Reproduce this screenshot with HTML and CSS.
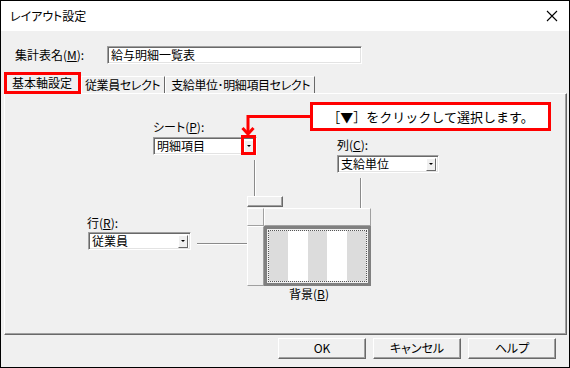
FILE: index.html
```html
<!DOCTYPE html>
<html lang="ja">
<head>
  <meta charset="UTF-8">
  <title>レイアウト設定</title>
  <link rel="stylesheet" href="styles.css">
</head>
<body>
  <div class="window">
    <div class="titlebar">
      <p class="title">レイアウト設定</p>
      <svg class="close" width="12" height="12" viewBox="0 0 12 12">
        <path d="M1 1 L11 11 M11 1 L1 11" stroke="#000" stroke-width="1.1" fill="none"/>
      </svg>
    </div>

    <div class="name-row">
      <label class="name-label">集計表名(<u>M</u>):</label>
      <div class="textbox">給与明細一覧表</div>
    </div>

    <div class="tabs">
      <div class="tab active">基本軸設定</div>
      <div class="tab">従業員セレクト</div>
      <div class="tab">支給単位･明細項目セレクト</div>
    </div>

    <div class="panel">
      <!-- 軸の配置図 -->
      <div class="axis-label sheet-label">シート(<u>P</u>):</div>
      <div class="combo sheet-combo"><span>明細項目</span><i class="drop"></i></div>

      <div class="axis-label col-label">列(<u>C</u>):</div>
      <div class="combo col-combo"><span>支給単位</span><i class="drop"></i></div>

      <div class="axis-label row-label">行(<u>R</u>):</div>
      <div class="combo row-combo"><span>従業員</span><i class="drop"></i></div>

      <div class="vline sheet-line"></div>
      <div class="sheet-tab"></div>
      <div class="vline col-line"></div>
      <div class="hline row-line"></div>

      <div class="preview">
        <div class="head corner"></div>
        <div class="head col-head"></div>
        <div class="head row-head"></div>
        <div class="data">
          <div class="stripes">
            <div class="stripe gray"></div>
            <div class="stripe"></div>
            <div class="stripe gray"></div>
            <div class="stripe"></div>
            <div class="stripe gray"></div>
          </div>
        </div>
      </div>
      <div class="bg-label">背景(<u>B</u>)</div>

      <!-- 注釈 -->
      <div class="mark"></div>
      <svg class="pointer" width="74" height="25" viewBox="0 0 74 25">
        <path d="M74 4.5 H10 V22" stroke="#f00" stroke-width="3" fill="none"/>
        <path d="M4.5 16 L10 22 L15.5 16" stroke="#f00" stroke-width="3" fill="none"/>
      </svg>
      <div class="callout">［▼］をクリックして選択します。</div>
    </div>

    <div class="buttons">
      <div class="btn">OK</div>
      <div class="btn">キャンセル</div>
      <div class="btn">ヘルプ</div>
    </div>
  </div>
</body>
</html>
```

FILE: styles.css
```css
* {
  margin: 0;
  padding: 0;
  box-sizing: border-box;
}
html, body {
  width: 100%;
  height: 100%;
  overflow: hidden;
}
body {
  font-family: "Noto Sans CJK JP", "Noto Sans", sans-serif;
  font-size: 12px;
  color: #000;
  font-feature-settings: "palt";
}
u {
  text-decoration: underline;
  text-underline-offset: 1px;
}
.window {
  width: 570px;
  height: 368px;
  border: 1px solid #000;
  background-color: #f0f0f0;
  display: flex;
  flex-direction: column;
}
.titlebar {
  height: 30px;
  background-color: #fff;
  display: flex;
  align-items: center;
  justify-content: space-between;
  padding: 0 11px 0 9px;
}
.title {
  font-size: 12px;
  line-height: 14px;
}
.name-row {
  display: flex;
  align-items: center;
  margin-top: 15px;
  padding-left: 14px;
  height: 18px;
}
.name-label {
  width: 92px;
  line-height: 14px;
}
.textbox {
  width: 255px;
  height: 18px;
  background-color: #fff;
  border: 1px solid;
  border-color: #a0a0a0 #fff #fff #a0a0a0;
  box-shadow: inset 1px 1px 0 #696969, inset -1px -1px 0 #e3e3e3;
  padding: 0 3px;
  line-height: 16px;
}
.tabs {
  display: flex;
  align-items: flex-end;
  margin-top: 8px;
  padding-left: 3px;
  height: 21px;
  position: relative;
  z-index: 1;
}
.tab {
  height: 17px;
  line-height: 15px;
  padding: 0 4px 0 3px;
  white-space: nowrap;
  letter-spacing: -0.4px;
  border-left: 1px solid #fff;
  border-right: 1px solid #696969;
  border-top: 1px solid #fff;
}
.tab.active {
  height: 22px;
  margin-bottom: -1px;
  width: 77px;
  border: 3px solid #f00;
  background-color: #f0f0f0;
  line-height: 15px;
  padding: 0 0 0 5px;
  letter-spacing: 0;
}
.tab:nth-child(3) {
  padding-left: 5px;
}
.panel {
  position: relative;
  margin-left: 3px;
  width: 563px;
  height: 242px;
  border: 1px solid;
  border-color: #fff #696969 #696969 #fff;
  box-shadow: inset -1px -1px 0 #a0a0a0;
}
.axis-label {
  position: absolute;
  line-height: 14px;
}
.sheet-label { left: 148px; top: 26px; }
.col-label { left: 332px; top: 44px; }
.row-label { left: 82px; top: 122px; }
.combo {
  position: absolute;
  height: 18px;
  background-color: #fff;
  border: 1px solid;
  border-color: #a0a0a0 #fff #fff #a0a0a0;
  box-shadow: inset 1px 1px 0 #696969, inset -1px -1px 0 #e3e3e3;
  display: flex;
  align-items: center;
  justify-content: space-between;
  padding: 1px 2px 1px 2px;
  line-height: 14px;
}
.combo span {
  padding-left: 1px;
}
.sheet-combo { left: 148px; top: 43px; width: 104px; }
.col-combo { left: 332px; top: 61px; width: 102px; }
.row-combo { left: 83px; top: 138px; width: 103px; }
.drop {
  width: 10px;
  height: 13px;
  background-color: #f0f0f0;
  border: 1px solid;
  border-color: #fff #696969 #696969 #fff;
  display: flex;
  align-items: center;
  justify-content: center;
}
.drop::before {
  content: "";
  border-left: 2px solid transparent;
  border-right: 2px solid transparent;
  border-top: 2px solid #000;
}
.vline {
  position: absolute;
  width: 2px;
  border-left: 1px solid #8a8a8a;
  border-right: 1px solid #fff;
}
.sheet-line { left: 249px; top: 66px; height: 36px; }
.col-line { left: 355px; top: 84px; height: 30px; }
.hline {
  position: absolute;
  height: 2px;
  border-top: 1px solid #8a8a8a;
  border-bottom: 1px solid #fff;
}
.row-line { left: 192px; top: 149px; width: 50px; }
.sheet-tab {
  position: absolute;
  left: 242px;
  top: 102px;
  width: 36px;
  height: 11px;
  background-color: #f0f0f0;
  border: 1px solid;
  border-color: #fff #696969 #696969 #fff;
  box-shadow: inset -1px -1px 0 #a0a0a0;
}
.preview {
  position: absolute;
  left: 242px;
  top: 114px;
  width: 124px;
  height: 78px;
  display: grid;
  grid-template-columns: 17px 1fr;
  grid-template-rows: 18px 1fr;
}
.head {
  background-color: #f0f0f0;
  border: 1px solid;
  border-color: #fff #a0a0a0 #a0a0a0 #fff;
}
.data {
  border: 3px solid #808080;
  padding: 1px;
  background-color: #f0f0f0;
}
.stripes {
  height: 100%;
  display: flex;
  border: 1px dotted #555;
}
.stripe {
  flex: 1;
  background-color: #fff;
}
.stripe.gray {
  background-color: #dcdcdc;
}
.bg-label {
  position: absolute;
  left: 242px;
  top: 193px;
  width: 124px;
  text-align: center;
  line-height: 14px;
}
.mark {
  position: absolute;
  left: 236px;
  top: 41px;
  width: 15px;
  height: 20px;
  border: 3px solid #f00;
}
.pointer {
  position: absolute;
  left: 233px;
  top: 18px;
}
.callout {
  position: absolute;
  left: 305px;
  top: 8px;
  width: 241px;
  height: 29px;
  border: 3px solid #f00;
  background-color: #fff;
  font-size: 13px;
  line-height: 23px;
  text-align: center;
  font-feature-settings: normal;
}
.buttons {
  display: flex;
  justify-content: flex-end;
  gap: 7px;
  margin-top: 3px;
  padding-right: 13px;
}
.btn {
  width: 88px;
  height: 21px;
  border: 1px solid;
  border-color: #fff #696969 #696969 #fff;
  box-shadow: inset -1px -1px 0 #a0a0a0;
  background-color: #f0f0f0;
  text-align: center;
  line-height: 18px;
}
```
